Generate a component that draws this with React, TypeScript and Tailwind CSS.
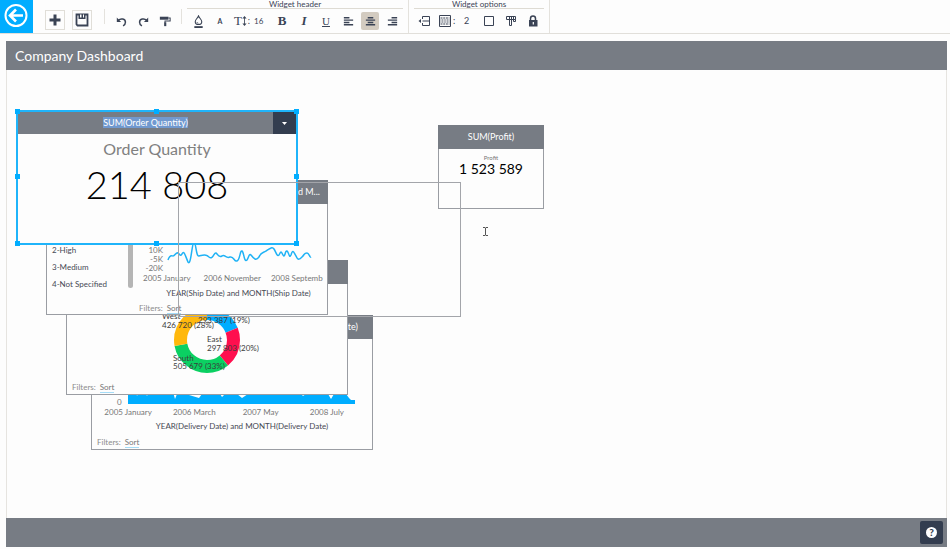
import React from 'react';
import clsx from 'clsx';

const ToolButton: React.FC<{ label: string; active?: boolean; children: React.ReactNode }> = ({
  label,
  active,
  children,
}) => (
  <button aria-label={label} title={label} className="flex h-5 w-[22px] items-center justify-center">
    <span
      className={clsx('flex h-[18px] w-[18px] items-center justify-center rounded-xs', active && 'bg-[#d3cbc0]')}
    >
      {children}
    </span>
  </button>
);

const Icon: React.FC<{ size?: number; children: React.ReactNode }> = ({ size = 14, children }) => (
  <svg width={size} height={size} viewBox="0 0 14 14" fill="none" stroke="currentColor" strokeWidth="1">
    {children}
  </svg>
);

const ToolGroup: React.FC<{ title: string; children: React.ReactNode }> = ({ title, children }) => (
  <section className="flex flex-col border-r border-[#e4e2dd] px-[5px]">
    <h2 className="h-[9px] border-b border-[#dedbd3] text-center text-[8px] leading-[8px]">{title}</h2>
    <div className="flex h-6 items-center">{children}</div>
  </section>
);

const Toolbar: React.FC = () => (
  <header className="flex h-[34px] shrink-0 border-b border-[#e1dfda] bg-[#fdfdfd] text-[#3a4355]">
    <button aria-label="Back" className="flex h-[33px] w-[33px] items-center justify-center bg-[#00adff] text-white">
      <svg width="26" height="26" viewBox="0 0 26 26" fill="none" stroke="currentColor" strokeWidth="2">
        <circle cx="12" cy="11.5" r="10.5" />
        <path d="M19 11.5H6M12 5.500l-6 6 6 6" strokeWidth="2.6" />
      </svg>
    </button>

    <div className="flex items-center gap-[7px] pt-[7px] pl-3">
      <button aria-label="Add widget" className="flex h-5 w-5 items-center justify-center border border-[#e0ded8]">
        <Icon>
          <path d="M7 1.5v11M1.5 7h11" strokeWidth="3" />
        </Icon>
      </button>
      <button aria-label="Save" className="flex h-5 w-5 items-center justify-center border border-[#e0ded8]">
        <Icon>
          <path d="M1.5 1.5h11v11h-10l-1-1z" strokeWidth="1.8" />
          <path d="M3.5 1h7v5h-7z" fill="currentColor" stroke="none" />
          <path d="M5 1.500h1.500v3H5zM8 1.500h1v3H8z" fill="#fff" stroke="none" />
        </Icon>
      </button>
    </div>

    <div className="my-[9px] ml-3 w-px self-stretch bg-[#e4e2dd]" />

    <div className="flex items-center px-[5px] pt-[9px]">
      <ToolButton label="Undo">
        <Icon size={11}>
          <path d="M3 5.500c3-3 9-2 9 2.500 0 2-1 3.500-3 4.500" strokeWidth="1.900" />
          <path d="M1 2v5.500h5.500z" fill="currentColor" stroke="none" />
        </Icon>
      </ToolButton>
      <ToolButton label="Redo">
        <Icon size={11}>
          <path d="M11 5.500c-3-3-9-2-9 2.500 0 2 1 3.500 3 4.500" strokeWidth="1.900" />
          <path d="M13 2v5.500H7.500z" fill="currentColor" stroke="none" />
        </Icon>
      </ToolButton>
      <ToolButton label="Format painter">
        <Icon size={12}>
          <path d="M1 2h10v3.500H1z" fill="currentColor" stroke="none" />
          <path d="M11 3.500h2v3.500H7v2" strokeWidth="1.200" />
          <path d="M6 8.500h2.500V13H6z" fill="currentColor" stroke="none" />
        </Icon>
      </ToolButton>
    </div>
    <div className="my-[9px] w-px self-stretch bg-[#e4e2dd]" />

    <ToolGroup title="Widget header">
      <ToolButton label="Fill colour">
        <Icon size={13}>
          <path d="M7 1C6 3.500 3.500 5 3.500 7.200a3.500 3 0 0 0 7 0C10.500 5 8 3.500 7 1z" strokeWidth="1.200" />
          <path d="M5.200 7.500C5.500 8.500 6 9 7 9" strokeWidth=".8" />
          <path d="M2.500 12h9v2h-9z" fill="currentColor" stroke="none" />
        </Icon>
      </ToolButton>
      <ToolButton label="Text colour">
        <span className="text-[7px] leading-3 font-bold">A</span>
      </ToolButton>
      <label htmlFor="font-size" className="flex w-[22px] items-center justify-center" aria-label="Font size">
        <span className="font-['Liberation_Serif',serif] text-[13px] leading-4">T</span>
        <svg width="5" height="10" viewBox="0 0 5 12" fill="currentColor">
          <path d="M2.500 0L5 3H3v6h2l-2.500 3L0 9h2V3H0z" />
        </svg>
        <span className="pl-px text-[9px] leading-4">:</span>
      </label>
      <input id="font-size" defaultValue="16" className="w-[18px] bg-transparent pl-px text-[8px] leading-4" />
      <ToolButton label="Bold">
        <span className="font-['Liberation_Serif',serif] text-[13px] leading-4 font-bold">B</span>
      </ToolButton>
      <ToolButton label="Italic">
        <span className="font-['Liberation_Serif',serif] text-[13px] leading-4 font-bold italic">I</span>
      </ToolButton>
      <ToolButton label="Underline">
        <span className="font-['Liberation_Serif',serif] text-[11px] leading-4 underline">U</span>
      </ToolButton>
      <ToolButton label="Align left">
        <Icon size={13}>
          <path d="M2 3h6M2 5.500h10M2 8h6M2 10.500h10" strokeWidth="1.500" />
        </Icon>
      </ToolButton>
      <ToolButton label="Align center" active>
        <Icon size={13}>
          <path d="M4 3h6M2 5.500h10M4 8h6M2 10.500h10" strokeWidth="1.500" />
        </Icon>
      </ToolButton>
      <ToolButton label="Align right">
        <Icon size={13}>
          <path d="M6 3h6M2 5.500h10M6 8h6M2 10.500h10" strokeWidth="1.500" />
        </Icon>
      </ToolButton>
    </ToolGroup>

    <ToolGroup title="Widget options">
      <ToolButton label="Padding">
        <Icon>
          <path d="M4.500 5V2.500h7V11.500h-7V9M4.500 7h7" />
          <path d="M3 5v4L.5 7z" fill="currentColor" stroke="none" />
        </Icon>
      </ToolButton>
      <label htmlFor="border-width" className="flex w-[26px] items-center gap-px pl-[3px]" aria-label="Border width">
        <svg width="12" height="12" viewBox="0 0 12 12" fill="none" stroke="currentColor">
          <path d="M.5 .5h11v11H.5z" />
          <path d="M1.500 3h9M1.500 9h9" strokeWidth="1.200" strokeDasharray="2 .7" />
          <path d="M1.500 5h9M1.500 7h9" strokeWidth="1.200" strokeDasharray="1 .6" />
        </svg>
        <span className="pl-px text-[9px] leading-4">:</span>
      </label>
      <input id="border-width" defaultValue="2" className="w-4 bg-transparent pl-[2px] text-[9px] leading-4" />
      <ToolButton label="Background">
        <Icon>
          <path d="M2.500 2.500h9v9h-9z" />
        </Icon>
      </ToolButton>
      <ToolButton label="Copy style">
        <Icon>
          <path d="M2.500 2.500h9v3h-9zM5.500 2.500v9h2v-9M9.500 2.500v5h2v-2" />
        </Icon>
      </ToolButton>
      <ToolButton label="Lock">
        <Icon>
          <path d="M4.500 7V4.500a2.500 2.500 0 0 1 5 0V7" strokeWidth="1.500" />
          <path d="M3 6h8.500v6.500H3z" fill="currentColor" stroke="none" />
          <path d="M6.700 8h1.200v2.500H6.700z" fill="#fff" stroke="none" />
        </Icon>
      </ToolButton>
    </ToolGroup>
  </header>
);

const WidgetFooter: React.FC = () => (
  <div className="flex gap-1 text-[8px] leading-[9px] text-[#8c8c8c]">
    <span>Filters:</span>
    <a href="#sort" className="border-b border-[#a5dcf7] text-[#777]">
      Sort
    </a>
  </div>
);

const Widget: React.FC<{ title: string; className: string; titleClass?: string; children: React.ReactNode }> = ({
  title,
  className,
  titleClass = 'text-center',
  children,
}) => (
  <article className={clsx('absolute flex flex-col border border-[#9a9da3] bg-[#fdfdfd]', className)}>
    <h2 className={clsx('-mx-px -mt-px h-6 shrink-0 bg-[#777c84] text-[9px] leading-6 text-white', titleClass)}>
      {title}
    </h2>
    {children}
  </article>
);

const DeliveryWidget: React.FC = () => (
  <Widget title="MONTH(Delivery Date)" className="top-[245px] left-[84px] h-[135px] w-[282px]" titleClass="pr-[15px] text-right">
    <div className="flex flex-1 flex-col justify-end">
      <div className="flex items-end gap-[6px] pl-[25px]">
        <span className="text-[8px] leading-[4px] text-[#777]">0</span>
        <svg width="228" height="60" viewBox="0 0 228 60" fill="#00adff">
          <path d="M0 60V48H8L9 52L11 48H17L19 52L21 48H45L47 55L49 50L61 51L71 54L74 50H92L94 53L97 50H109L114 54L120 50H173L175 52L178 50H200L203 55L206 50H218L221 54L223 56H227V60z" />
        </svg>
      </div>
      <div className="grid w-[268px] grid-cols-4 pl-[3px] text-center text-[8px] leading-[16px] whitespace-nowrap text-[#777]">
        <span>2005 January</span>
        <span>2006 March</span>
        <span>2007 May</span>
        <span>2008 July</span>
      </div>
      <p className="pl-[20px] text-center text-[8px] leading-[12px] text-[#464954]">
        YEAR(Delivery Date) and MONTH(Delivery Date)
      </p>
      <div className="pt-[6px] pb-px pl-[5px]">
        <WidgetFooter />
      </div>
    </div>
  </Widget>
);

const RegionWidget: React.FC = () => (
  <Widget title="SUM(Profit)" className="top-[190px] left-[59px] h-[135px] w-[282px]">
    <div className="flex flex-1 flex-col justify-between pt-px pb-px pl-[5px]">
      <svg width="270" height="92" viewBox="0 0 270 92" className="self-start">
        <g fill="none" strokeWidth="13" transform="translate(135 55) rotate(-90)">
          <circle r="26.500" stroke="#00adff" pathLength="100" strokeDasharray="19 81" />
          <circle r="26.500" stroke="#ff0f4e" pathLength="100" strokeDasharray="20 80" strokeDashoffset="-19" />
          <circle r="26.500" stroke="#0bd062" pathLength="100" strokeDasharray="33 67" strokeDashoffset="-39" />
          <circle r="26.500" stroke="#ffb80c" pathLength="100" strokeDasharray="28 72" strokeDashoffset="-72" />
        </g>
        <g className="text-[8px]" fill="#3c3c3c">
          <text x="90" y="34">West</text>
          <text x="90" y="43">426 720 (28%)</text>
          <text x="126" y="38">293 387 (19%)</text>
          <text x="135" y="57">East</text>
          <text x="135" y="66">297 803 (20%)</text>
          <text x="101" y="76">South</text>
          <text x="101" y="84">505 679 (33%)</text>
        </g>
      </svg>
      <WidgetFooter />
    </div>
  </Widget>
);

const ShipWidget: React.FC = () => (
  <Widget
    title="YEAR(Ship Date) and M..."
    className="top-[110px] left-[39px] h-[135px] w-[282px]"
    titleClass="pr-2 text-right"
  >
    <div className="flex flex-1">
      <div className="flex w-[86px] justify-between pt-[38px]">
        <ul className="pl-[5px] text-[8px] leading-[17px] text-[#464954]">
          <li>2-High</li>
          <li>3-Medium</li>
          <li>4-Not Specified</li>
        </ul>
        <div className="h-[46px] w-[5px] rounded-full bg-[#b5b5b5]" />
      </div>
      <div className="flex flex-1 flex-col justify-end overflow-hidden">
        <div className="flex items-start gap-[5px] pl-[10px]">
          <div className="w-5 pt-px text-right text-[8px] leading-[9px] text-[#777]">
            <div>10K</div>
            <div>-5K</div>
            <div>-20K</div>
          </div>
          <svg width="144" height="27" viewBox="0 0 144 27" fill="none" stroke="#1fb2f5" strokeWidth="1.500" className="overflow-visible">
            <path d="M0 15C2 9 4 11 5 11C7 11 8 7 10 8C12 9 12 12 14 9C16 5 17 10 20 17C23 22 24-3 26-3C28-3 28 12 31 11C35 10 38 9 41 12C45 15 46 7 48 8C50 9 50 13 54 11C57 9 58 14 62 12C66 11 66 17 69 16C72 15 72 5 74 6C76 7 76 18 79 15C81 12 81 8 83 10C86 14 88 16 91 12C93 7 95 8 98 6C102 4 104 1 106 4C108 7 109 12 111 10C113 6 113 6 115 10C117 14 117 5 119 6C121 7 121 14 123 10C125 3 126 8 128 11C130 16 132 14 134 12C137 9 136 8 139 8C141 8 142 13 143 12" />
          </svg>
        </div>
        <div className="flex gap-[10px] pl-[10px] text-[8px] leading-[10px] whitespace-nowrap text-[#777]">
          <span>2005 January</span>
          <span className="pl-[3px]">2006 November</span>
          <span>2008 Septemb</span>
        </div>
        <p className="pt-1 pl-[17px] text-center text-[8px] leading-[12px] whitespace-nowrap text-[#464954]">
          YEAR(Ship Date) and MONTH(Ship Date)
        </p>
        <div className="pt-[5px] pl-[6px]">
          <WidgetFooter />
        </div>
      </div>
    </div>
  </Widget>
);

const ProfitWidget: React.FC = () => (
  <Widget title="SUM(Profit)" className="top-[55px] left-[431px] h-[84px] w-[106px]">
    <div className="pt-1 text-center">
      <p className="text-[6px] leading-[9px] text-[#777]">Profit</p>
      <p className="text-[14px] leading-[14px] text-black">1 523 589</p>
    </div>
  </Widget>
);

const handles = [
  '-top-[3px] -left-[3px]',
  '-top-[3px] left-[136px]',
  '-top-[3px] -right-[3px]',
  'top-[62px] -left-[3px]',
  'top-[62px] -right-[3px]',
  '-bottom-[3px] -left-[3px]',
  '-bottom-[3px] left-[136px]',
  '-bottom-[3px] -right-[3px]',
];

const SelectedWidget: React.FC = () => (
  <article className="absolute top-[40px] left-[9px] h-[135px] w-[282px] border-2 border-[#1fb4fa] bg-[#fdfdfd]">
    <div className="flex h-[22px] bg-[#777c84] text-white">
      <h2 className="flex flex-1 items-center justify-center pb-px text-[9px] leading-[11px]">
        <span className="bg-[#7199cf]">SUM(Order Quantity)</span>
      </h2>
      <button aria-label="Widget menu" className="flex w-[23px] items-center justify-center bg-[#333d4f]">
        <svg width="5" height="3" viewBox="0 0 5 3" fill="currentColor">
          <path d="M0 0h5L2.500 3z" />
        </svg>
      </button>
    </div>
    <div className="pt-[5px] text-center">
      <p className="text-[16px] leading-5 text-[#808080]">Order Quantity</p>
      <p className="text-[38px] leading-[50px] font-light text-black">214 808</p>
    </div>
    {handles.map((place) => (
      <span key={place} className={clsx('absolute h-[5px] w-[5px] bg-[#00adff]', place)} />
    ))}
  </article>
);

export default function App() {
  return (
    <div className="flex h-screen flex-col bg-[#fdfdfd] font-['Lato','Liberation_Sans',sans-serif]">
      <Toolbar />
      <main className="mt-[7px] mr-[3px] mb-[2px] ml-[6px] flex min-h-0 flex-1 flex-col">
        <h1 className="h-[29px] shrink-0 bg-[#777c84] pl-[9px] text-[14px] leading-[29px] text-white">
          Company Dashboard
        </h1>
        <div className="relative flex-1 overflow-hidden border-x border-[#e6e4e0]">
          <DeliveryWidget />
          <RegionWidget />
          <ShipWidget />
          <ProfitWidget />
          <SelectedWidget />
          {/* Drag outline */}
          <div className="pointer-events-none absolute top-[112px] left-[171px] h-[135px] w-[283px] border border-[#a3a5aa]" />
          {/* Text cursor */}
          <svg width="5" height="9" viewBox="0 0 5 9" fill="none" stroke="#555" className="absolute top-[157px] left-[476px]">
            <path d="M0 .5h2l.5.5.5-.5h2M2.500 1v7M0 8.500h2l.5-.5.5.5h2" />
          </svg>
        </div>
        <footer className="flex h-[29px] shrink-0 items-center justify-end bg-[#777c84] pr-1">
          <button aria-label="Help" className="flex h-[23px] w-[23px] items-center justify-center rounded-xs bg-[#333d4f]">
            <span className="flex h-[11px] w-[11px] items-center justify-center rounded-full bg-white text-[10px] leading-[11px] font-black text-[#333d4f]">
              ?
            </span>
          </button>
        </footer>
      </main>
    </div>
  );
}
